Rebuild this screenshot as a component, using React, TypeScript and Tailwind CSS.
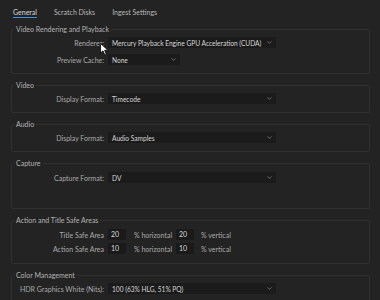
import { ChevronDown } from "lucide-react";

function Select({ value, width }: { value: string; width: string }) {
  return (
    <div className={`flex items-center justify-between h-[11px] bg-[#1b1b1b] rounded-[1px] pl-[4px] pr-[3px] ${width}`}>
      <span className="whitespace-nowrap text-[6.6px] text-[#d6d6d6]">{value}</span>
      <ChevronDown size={7} strokeWidth={2} className="shrink-0 text-[#9a9a9a]" />
    </div>
  );
}

function Row({ label, children }: { label: string; children: React.ReactNode }) {
  return (
    <div className="flex items-center">
      <div className="w-[96px] shrink-0 whitespace-nowrap text-right pr-[4px] text-[#a9a9a9]">{label}</div>
      {children}
    </div>
  );
}

function Group({ title, className, children }: { title: string; className?: string; children: React.ReactNode }) {
  return (
    <fieldset className={`border border-[#303030] rounded-[2px] ${className ?? ""}`}>
      <legend className="ml-[2px] px-[2px] leading-[8px] text-[#b3b3b3]">{title}</legend>
      {children}
    </fieldset>
  );
}

function NumBox({ value }: { value: string }) {
  return <div className="w-[18px] h-[11px] bg-[#1a1a1a] pl-[3px] leading-[11px] text-[#d6d6d6]">{value}</div>;
}

function SafeRow({ label, a, b }: { label: string; a: string; b: string }) {
  return (
    <Row label={label}>
      <NumBox value={a} />
      <span className="ml-[8px] w-[42px] whitespace-nowrap text-[#a9a9a9]">% horizontal</span>
      <NumBox value={b} />
      <span className="ml-[7px] text-[#a9a9a9]">% vertical</span>
    </Row>
  );
}

export default function App() {
  return (
    <div
      className="relative w-[380px] h-[300px] overflow-hidden bg-[#232323] text-[7px] leading-[10px]"
      style={{ fontFamily: "Lato, 'Open Sans', sans-serif" }}
    >
      <div className="flex gap-[17px] pl-[13px] pt-[7px] h-[25px] text-[#b8b8b8]">
        <div className="h-[11px] border-b border-[#3d8de0] text-[#d8d8d8]">General</div>
        <div>Scratch Disks</div>
        <div>Ingest Settings</div>
      </div>

      <div className="flex flex-col gap-[7px] pl-[11px] pr-[10px]">
        <Group title="Video Rendering and Playback" className="pt-[4px] pb-[8px] flex flex-col gap-[6px]">
          <Row label="Renderer:">
            <Select value="Mercury Playback Engine GPU Acceleration (CUDA)" width="w-[168px]" />
          </Row>
          <Row label="Preview Cache:">
            <Select value="None" width="w-[72px]" />
          </Row>
        </Group>

        <Group title="Video" className="pt-[4px] pb-[8px]">
          <Row label="Display Format:">
            <Select value="Timecode" width="w-[168px]" />
          </Row>
        </Group>

        <Group title="Audio" className="pt-[4px] pb-[8px]">
          <Row label="Display Format:">
            <Select value="Audio Samples" width="w-[168px]" />
          </Row>
        </Group>

        <Group title="Capture" className="pt-[5px] pb-[25px]">
          <Row label="Capture Format:">
            <Select value="DV" width="w-[168px]" />
          </Row>
        </Group>

        <Group title="Action and Title Safe Areas" className="pt-[5px] pb-[9px] flex flex-col gap-[3px]">
          <SafeRow label="Title Safe Area" a="20" b="20" />
          <SafeRow label="Action Safe Area" a="10" b="10" />
        </Group>

        <Group title="Color Management" className="pt-[4px] pb-[9px]">
          <Row label="HDR Graphics White (Nits):">
            <Select value="100 (63% HLG, 51% PQ)" width="w-[168px]" />
          </Row>
        </Group>
      </div>

      <svg className="absolute left-[100px] top-[43px]" width="9" height="13" viewBox="0 0 9 13">
        <path d="M0.5 0.5 L0.5 10 L3 7.8 L4.8 12 L6.3 11.3 L4.6 7.3 L8 7.3 Z" fill="#ffffff" stroke="#000000" strokeWidth="0.8" />
      </svg>
    </div>
  );
}
